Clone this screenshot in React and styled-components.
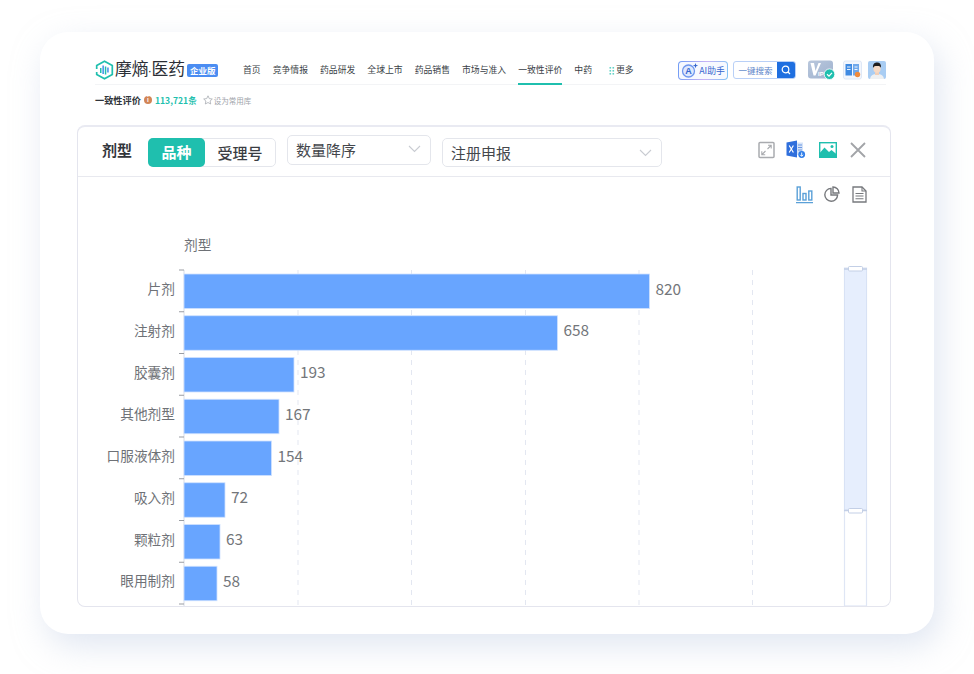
import React from 'react';
import styled, { createGlobalStyle } from 'styled-components';

const teal = '#1fbfae';
const cjk = '"Noto Sans CJK SC", "Noto Sans", sans-serif';

const GlobalStyle = createGlobalStyle`
  html, body { margin: 0; padding: 0; background: #fff; }
  body { font-family: ${cjk}; overflow: hidden; }
`;

const Page = styled.div`
  width: 974px;
  height: 674px;
  padding: 32px 40px 40px;
  box-sizing: border-box;
`;

const Card = styled.div`
  height: 602px;
  background: #fff;
  border-radius: 28px;
  box-shadow: 6px 12px 32px rgba(196, 208, 230, 0.5);
  padding: 28px 43px 28px 37px;
  box-sizing: border-box;
  display: flex;
  flex-direction: column;
`;

const TopBar = styled.div`
  height: 25px;
  flex: none;
  box-sizing: border-box;
  margin-left: 18px;
  margin-right: 5px;
  display: flex;
  align-items: flex-start;
  border-bottom: 1px solid #f3f4f6;
`;

const Logo = styled.div`
  width: 148px;
  height: 20px;
  flex: none;
  display: flex;
  align-items: center;
`;

const LogoText = styled.span`
  font-size: 16.8px;
  line-height: 20px;
  color: #2b2f36;
  margin-left: 1px;
  white-space: nowrap;
`;

const LogoDot = styled.span`
  font-family: "Liberation Sans", sans-serif;
  font-size: 9px;
  font-weight: 700;
`;

const Edition = styled.span`
  margin-left: 2px;
  width: 31px;
  height: 13px;
  background: #4b8df2;
  border-radius: 2px;
  color: #fff;
  font-size: 8.5px;
  font-weight: 700;
  line-height: 13px;
  text-align: center;
  white-space: nowrap;
`;

const Nav = styled.nav`
  width: 435px;
  flex: none;
  height: 25px;
  display: flex;
  gap: 12px;
`;

const NavItem = styled.a`
  height: 23px;
  margin-left: ${(p) => p.$push || 0}px;
  font-size: 8.84px;
  line-height: 20px;
  color: #3a3f47;
  white-space: nowrap;
  display: flex;
  align-items: flex-start;
  gap: 1px;
  border-bottom: ${(p) => (p.$active ? `2px solid ${teal}` : '2px solid transparent')};
`;

const Tools = styled.div`
  flex: 1;
  height: 20px;
  display: flex;
  align-items: center;
`;

const AiButton = styled.div`
  width: 50px;
  height: 19px;
  box-sizing: border-box;
  border-radius: 4px;
  border: 1px solid transparent;
  background: linear-gradient(#f7f9ff, #f7f9ff) padding-box,
    linear-gradient(100deg, #6f9cf5, #c9b4f5 55%, #7fc4f5) border-box;
  display: flex;
  align-items: center;
  justify-content: center;
  font-size: 8.8px;
  color: #3566cf;
  white-space: nowrap;
`;

const SearchBox = styled.div`
  margin-left: 5px;
  width: 63px;
  height: 18px;
  box-sizing: border-box;
  border-radius: 3px;
  border: 1px solid #b9d0f7;
  display: flex;
  overflow: hidden;
`;

const SearchLabel = styled.span`
  flex: 1;
  font-size: 8.5px;
  line-height: 16px;
  text-align: center;
  color: #5b83c9;
  white-space: nowrap;
`;

const SearchButton = styled.span`
  width: 18px;
  background: #1f6fe0;
  display: flex;
  align-items: center;
  justify-content: center;
`;

const ToolIcon = styled.svg`
  display: block;
  flex: none;
  margin-left: ${(p) => p.$gap}px;
`;

const SubBar = styled.div`
  margin: 6px 0 0 18px;
  height: 18px;
  flex: none;
  display: flex;
  align-items: center;
`;

const SubTitle = styled.span`
  font-size: 9.2px;
  font-weight: 700;
  color: #30343a;
  white-space: nowrap;
`;

const InfoDot = styled.span`
  margin-left: 3px;
  width: 8px;
  height: 8px;
  border-radius: 50%;
  background: #d28556;
  color: #fff;
  font-size: 6px;
  font-weight: 700;
  line-height: 8px;
  text-align: center;
`;

const Count = styled.span`
  margin-left: 3px;
  font-size: 8.6px;
  font-weight: 700;
  color: ${teal};
  white-space: nowrap;
`;

const Favourite = styled.span`
  margin-left: 6px;
  font-size: 7.5px;
  color: #a0a4aa;
  display: flex;
  align-items: center;
  gap: 1px;
  white-space: nowrap;
`;

const Panel = styled.section`
  margin-top: 16px;
  height: 482px;
  flex: none;
  box-sizing: border-box;
  border: 1px solid #e4e5ee;
  border-top-width: 2px;
  border-top-color: #e9eaf2;
  border-radius: 8px;
  overflow: hidden;
  display: flex;
  flex-direction: column;
`;

const PanelHead = styled.div`
  height: 50px;
  flex: none;
  box-sizing: border-box;
  border-bottom: 1px solid #e8e9ef;
  display: flex;
  align-items: flex-start;
  padding-left: 24px;
`;

const PanelTitle = styled.span`
  width: 46px;
  flex: none;
  margin-top: 12px;
  font-size: 15px;
  line-height: 22px;
  font-weight: 700;
  color: #33363b;
`;

const Segments = styled.div`
  margin-top: 11px;
  width: 128px;
  height: 29px;
  box-sizing: border-box;
  flex: none;
  display: flex;
  border: 1px solid #e4e6ec;
  border-radius: 5px;
`;

const Segment = styled.span`
  flex: ${(p) => (p.$active ? '0 0 57px' : '1')};
  margin: ${(p) => (p.$active ? '-1px 0 -1px -1px' : '0')};
  border-radius: 5px;
  background: ${(p) => (p.$active ? teal : 'transparent')};
  color: ${(p) => (p.$active ? '#fff' : '#3a3d42')};
  font-size: 15px;
  font-weight: ${(p) => (p.$active ? 700 : 500)};
  line-height: 28px;
  text-align: center;
`;

const Select = styled.div`
  margin-left: 11px;
  margin-top: ${(p) => p.$top}px;
  width: ${(p) => p.$width}px;
  height: ${(p) => p.$height}px;
  flex: none;
  box-sizing: border-box;
  border: 1px solid #e4e6ec;
  border-radius: 5px;
  padding: 0 9px ${(p) => p.$lift || 0}px 8px;
  display: flex;
  align-items: center;
  justify-content: space-between;
  font-size: 15px;
  color: #44474c;
`;

const HeadIcons = styled.div`
  margin-left: 96px;
  margin-top: 13px;
  display: flex;
  align-items: center;
`;

const ChartTools = styled.div`
  height: 33px;
  flex: none;
  box-sizing: border-box;
  padding: 9px 23px 0 0;
  display: flex;
  justify-content: flex-end;
  align-items: flex-start;
`;

const ChartFrame = styled.svg`
  display: block;
  flex: none;
`;

const LogoMark = () => (
  <svg width="19" height="20" viewBox="0 0 19 20">
    <path d="M9.5 1.2 17.3 5.6V14.4L9.5 18.8 1.7 14.4V5.6Z" fill="none" stroke={teal} strokeWidth="1.7" strokeDasharray="38 3" />
    <g fill="#3f8fe8">
      <rect x="5" y="8" width="1.5" height="5" fill={teal} />
      <rect x="7.4" y="5.5" width="1.5" height="8.5" />
      <rect x="9.8" y="6.5" width="1.5" height="8" fill={teal} />
      <rect x="12.2" y="7.5" width="1.5" height="5" />
    </g>
  </svg>
);

const DotsIcon = () => (
  <svg width="6" height="20" viewBox="0 0 6 20">
    <g fill="#63d2c6">
      {[7, 10, 13].flatMap((y) => [0.5, 3.5].map((x) => <rect key={`${x}-${y}`} x={x} y={y} width="1.6" height="1.6" />))}
    </g>
  </svg>
);

const AiIcon = () => (
  <svg width="18" height="16" viewBox="0 0 18 16">
    <circle cx="7.5" cy="9" r="6" fill="#dfe8fd" stroke="#6f97ee" strokeWidth="1.3" />
    <text x="7.5" y="12.2" textAnchor="middle" fontSize="9" fontWeight="700" fill="#3566cf" fontFamily="Liberation Sans, sans-serif">A</text>
    <path d="M14.5 1 15.2 3 17.2 3.6 15.2 4.3 14.5 6.3 13.8 4.3 11.8 3.6 13.8 3Z" fill="#3566cf" />
  </svg>
);

const VipBadge = () => (
  <ToolIcon $gap={12} width="27" height="20" viewBox="0 0 27 20">
    <defs>
      <linearGradient id="vip" x1="0" y1="0" x2="1" y2="1">
        <stop offset="0" stopColor="#b9c7dc" />
        <stop offset="1" stopColor="#9fb2cf" />
      </linearGradient>
    </defs>
    <rect x="0" y="0.5" width="25" height="18" rx="3" fill="url(#vip)" />
    <path d="M2.5 3 H6 L7.5 11 10.5 3 H13 L7.5 15.5 H5.5Z" fill="#fff" />
    <text x="10" y="16" fontSize="6" fontWeight="700" fill="#fff" fontFamily="Liberation Sans, sans-serif">IP</text>
    <circle cx="21.5" cy="14.2" r="5.3" fill={teal} stroke="#fff" strokeWidth="0.8" />
    <path d="M19 14.2 21 16.1 24 12.8" fill="none" stroke="#fff" strokeWidth="1.2" />
  </ToolIcon>
);

const BookBadge = () => (
  <ToolIcon $gap={8} width="19" height="20" viewBox="0 0 19 20">
    <rect x="0.5" y="1" width="18" height="18" rx="2" fill="#f2f6fd" stroke="#dfe8f6" />
    <path d="M2.5 4H9V15.5H2.5Z" fill="#3f8ae2" />
    <path d="M10 4H16V15.5H10Z" fill="#6fa8ec" />
    <path d="M4 7H7.5M4 9.5H7.5M11.5 7H14.5M11.5 9.5H14.5" stroke="#fff" strokeWidth="0.9" />
    <circle cx="14.5" cy="14.5" r="2.7" fill="#ef8a3c" />
  </ToolIcon>
);

const AvatarBadge = () => (
  <ToolIcon $gap={6} width="18" height="20" viewBox="0 0 18 20">
    <rect x="0" y="1" width="18" height="18" rx="2" fill="#a9cdf3" />
    <path d="M2 19C2.5 15 5.5 14 9 14S15.5 15 16 19Z" fill="#eef0f2" />
    <rect x="7" y="11" width="4" height="4" fill="#f1cfb8" />
    <ellipse cx="9" cy="8.5" rx="3.6" ry="4.4" fill="#f6d9c4" />
    <path d="M5 8C4.6 3.6 7 2.6 9.2 2.6 11.8 2.6 13.4 4.4 13 8 12.4 6.2 11 5.8 9 6 7 6 5.8 6.2 5 8Z" fill="#1f1d1e" />
  </ToolIcon>
);

const Chevron = () => (
  <svg width="13" height="8" viewBox="0 0 13 8">
    <path d="M1 1 6.5 6.5 12 1" fill="none" stroke="#c9ccd2" strokeWidth="1.1" />
  </svg>
);

const ExpandIcon = () => (
  <ToolIcon $gap={0} width="17" height="18" viewBox="0 0 17 18">
    <rect x="1" y="1.5" width="15" height="15" rx="1" fill="none" stroke="#a9abaf" strokeWidth="1.5" />
    <path d="M9.5 8 13 4.5M10 4.3H13.2V7.5M7.5 10 4 13.5M3.8 10.2V13.7H7.2" fill="none" stroke="#a9abaf" strokeWidth="1.1" />
  </ToolIcon>
);

const ExcelIcon = () => (
  <ToolIcon $gap={11} width="20" height="19" viewBox="0 0 20 19">
    <path d="M0.5 2.5 11 0.5V17.5L0.5 15.5Z" fill="#2f6fdc" />
    <path d="M11 2.5H17V15H11Z" fill="#d5e3f8" />
    <path d="M12 5H16M12 7.5H16M12 10H16" stroke="#5f8fdf" strokeWidth="0.9" />
    <path d="M3.2 5.5 7.4 12.5M7.4 5.5 3.2 12.5" stroke="#fff" strokeWidth="1.2" />
    <circle cx="15.7" cy="14.5" r="3.4" fill="#2f7de8" />
    <path d="M15.7 12.5V16M14.2 14.8 15.7 16.4 17.2 14.8" fill="none" stroke="#fff" strokeWidth="0.9" />
  </ToolIcon>
);

const PictureIcon = () => (
  <ToolIcon $gap={13} width="18" height="16" viewBox="0 0 18 16">
    <rect x="0.7" y="0.7" width="16.6" height="14.6" fill="#fff" stroke={teal} strokeWidth="1.4" />
    <circle cx="13" cy="4.5" r="1.5" fill={teal} />
    <path d="M0.7 15.3V11L5.5 5.5 10 10 12.5 8 17.3 12V15.3Z" fill={teal} />
  </ToolIcon>
);

const CloseIcon = () => (
  <ToolIcon $gap={13} width="16" height="16" viewBox="0 0 16 16">
    <path d="M1 1 15 15M15 1 1 15" stroke="#a2a4a8" strokeWidth="1.8" />
  </ToolIcon>
);

const BarsIcon = () => (
  <ToolIcon $gap={0} width="17" height="18" viewBox="0 0 17 18">
    <g fill="none" stroke="#5aa0d8" strokeWidth="1.4">
      <rect x="1.2" y="1" width="3" height="13" />
      <rect x="7" y="7.5" width="3" height="6.5" />
      <rect x="12.8" y="5" width="3" height="9" />
    </g>
    <path d="M0 16.6H17" stroke="#5aa0d8" strokeWidth="1.2" />
  </ToolIcon>
);

const PieIcon = () => (
  <ToolIcon $gap={11} width="16" height="16" viewBox="0 0 16 16">
    <path d="M7 2.4A6.4 6.4 0 1 0 13.6 9H7Z" fill="none" stroke="#77797d" strokeWidth="1.4" />
    <path d="M9 1A6 6 0 0 1 15 7H9Z" fill="none" stroke="#77797d" strokeWidth="1.4" />
  </ToolIcon>
);

const DocIcon = () => (
  <ToolIcon $gap={12} width="15" height="17" viewBox="0 0 15 17">
    <path d="M1 1H10L14 5V16H1Z" fill="none" stroke="#77797d" strokeWidth="1.3" />
    <path d="M10 1V5H14M3.5 7.5H11.5M3.5 10H11.5M3.5 12.7H11.5" fill="none" stroke="#77797d" strokeWidth="1.1" />
  </ToolIcon>
);

const rows = [
  { name: '片剂', value: 820, end: 649.5 },
  { name: '注射剂', value: 658, end: 557.5 },
  { name: '胶囊剂', value: 193, end: 294 },
  { name: '其他剂型', value: 167, end: 279 },
  { name: '口服液体剂', value: 154, end: 271.5 },
  { name: '吸入剂', value: 72, end: 225 },
  { name: '颗粒剂', value: 63, end: 220 },
  { name: '眼用制剂', value: 58, end: 217 },
];

const grid = [298, 411.5, 525.5, 639, 752.5];
const step = 41.75;

// viewBox uses page coordinates so the numbers can be read straight off the screenshot
const Chart = () => (
  <ChartFrame width="812" height="396" viewBox="78 210 812 396" fontFamily={cjk}>
    {grid.map((x) => (
      <line key={x} x1={x} x2={x} y1="270" y2="606" stroke="#e3e7f1" strokeDasharray="5 5" />
    ))}
    <line x1="184" x2="184" y1="270" y2="606" stroke="#d8dce6" />
    {Array.from({ length: 9 }, (_, i) => (
      <line key={i} x1="179" x2="184" y1={270 + i * step} y2={270 + i * step} stroke="#9a9da3" />
    ))}
    <text x="184" y="250" fontSize="13.7" fill="#6e7176">剂型</text>
    {rows.map((r, i) => {
      const y = 274 + i * step;
      return (
        <g key={r.name}>
          <rect x="184" y={y} width={r.end - 184} height="34.5" fill="#68a5ff" stroke="#cfe2ff" strokeWidth="0.8" />
          <text x="175" y={y + 20} fontSize="13.7" textAnchor="end" fill="#6e7176">{r.name}</text>
          <text x={r.end + 6} y={y + 20.5} fontSize="15.4" fill="#73767a">{r.value}</text>
        </g>
      );
    })}
    <rect x="844.5" y="268" width="22" height="338" fill="none" stroke="#dfe6f5" strokeWidth="1.2" />
    <rect x="844.5" y="269" width="22" height="241" fill="#e6eefd" stroke="#d8e2f5" />
    <path d="M844 269H867M844 510.5H867" stroke="#c3cfe6" strokeWidth="1.4" />
    <rect x="848.5" y="266.5" width="14" height="4.5" rx="1" fill="#fff" stroke="#c3cfe6" />
    <rect x="848.5" y="508.5" width="14" height="4.5" rx="1" fill="#fff" stroke="#c3cfe6" />
  </ChartFrame>
);

export default function App() {
  return (
    <>
      <GlobalStyle />
      <Page>
        <Card>
          <TopBar>
            <Logo>
              <LogoMark />
              <LogoText>摩熵<LogoDot>·</LogoDot>医药</LogoText>
              <Edition>企业版</Edition>
            </Logo>
            <Nav>
              <NavItem>首页</NavItem>
              <NavItem>竞争情报</NavItem>
              <NavItem>药品研发</NavItem>
              <NavItem>全球上市</NavItem>
              <NavItem>药品销售</NavItem>
              <NavItem>市场与准入</NavItem>
              <NavItem $active>一致性评价</NavItem>
              <NavItem>中药</NavItem>
              <NavItem $push={5}><DotsIcon />更多</NavItem>
            </Nav>
            <Tools>
              <AiButton><AiIcon />AI助手</AiButton>
              <SearchBox>
                <SearchLabel>一键搜索</SearchLabel>
                <SearchButton>
                  <svg width="10" height="10" viewBox="0 0 10 10">
                    <circle cx="4.5" cy="4.5" r="3.3" fill="none" stroke="#fff" strokeWidth="1.2" />
                    <path d="M7 7 9 9" stroke="#fff" strokeWidth="1.2" />
                  </svg>
                </SearchButton>
              </SearchBox>
              <VipBadge />
              <BookBadge />
              <AvatarBadge />
            </Tools>
          </TopBar>
          <SubBar>
            <SubTitle>一致性评价</SubTitle>
            <InfoDot>i</InfoDot>
            <Count>113,721条</Count>
            <Favourite>
              <svg width="10" height="10" viewBox="0 0 10 10">
                <path d="M5 .8 6.3 3.6 9.3 4 7.1 6 7.7 9 5 7.5 2.3 9 2.9 6 .7 4 3.7 3.6Z" fill="none" stroke="#a8acb2" strokeWidth="0.8" />
              </svg>
              设为常用库
            </Favourite>
          </SubBar>
          <Panel>
            <PanelHead>
              <PanelTitle>剂型</PanelTitle>
              <Segments>
                <Segment $active>品种</Segment>
                <Segment>受理号</Segment>
              </Segments>
              <Select $top={8} $width={144} $height={30} $lift={2}>数量降序<Chevron /></Select>
              <Select $top={11} $width={220} $height={29}>注册申报<Chevron /></Select>
              <HeadIcons>
                <ExpandIcon />
                <ExcelIcon />
                <PictureIcon />
                <CloseIcon />
              </HeadIcons>
            </PanelHead>
            <ChartTools>
              <BarsIcon />
              <PieIcon />
              <DocIcon />
            </ChartTools>
            <Chart />
          </Panel>
        </Card>
      </Page>
    </>
  );
}
